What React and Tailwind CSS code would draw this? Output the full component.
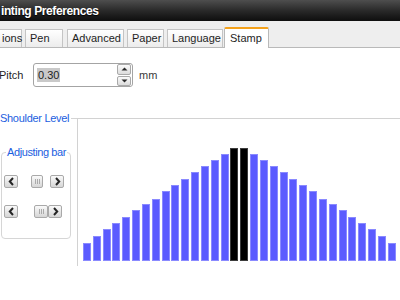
import React from 'react';

const tabs = [
  { label: 'ions', cls: 'ml-[-3px] w-[25px]' },
  { label: 'Pen', cls: 'ml-[3px] w-[38px]' },
  { label: 'Advanced', cls: 'ml-[4px] w-[57px]' },
  { label: 'Paper', cls: 'ml-[3px] w-[37px]' },
  { label: 'Language', cls: 'ml-[3px] w-[56px]' },
];

// 左右対称のバー高さ（中央の2本は黒）
const rise = [18, 25, 32, 38, 44, 51, 57, 62, 70, 76, 82, 89, 95, 101, 107];
const bars = [
  ...rise.map((h) => ({ h, on: false })),
  { h: 113, on: true },
  { h: 113, on: true },
  ...[...rise].reverse().map((h) => ({ h, on: false })),
];

function Chevron({ dir }) {
  return (
    <svg width="7" height="9" viewBox="0 0 7 9">
      <path
        d={dir === 'left' ? 'M5 1 L1.8 4.5 L5 8' : 'M2 1 L5.2 4.5 L2 8'}
        fill="none"
        stroke="#262626"
        strokeWidth="2"
      />
    </svg>
  );
}

function SmallBtn({ children, className = '' }) {
  return (
    <div
      className={`h-[13px] flex items-center justify-center rounded-[2px] border border-[#a9a9a9] bg-gradient-to-b from-[#fafafa] to-[#d6d6d6] ${className}`}
    >
      {children}
    </div>
  );
}

function Grip() {
  return (
    <div className="flex gap-[1px]">
      <div className="w-[1px] h-[5px] bg-[#aaaaaa]" />
      <div className="w-[1px] h-[5px] bg-[#aaaaaa]" />
      <div className="w-[1px] h-[5px] bg-[#aaaaaa]" />
    </div>
  );
}

function ScrollRow({ thumbLeft, thumbW, gapAfter }) {
  return (
    <div className="flex items-center h-[13px]">
      <SmallBtn className="w-[14px] ml-[2px]">
        <Chevron dir="left" />
      </SmallBtn>
      <div style={{ width: thumbLeft }} />
      <SmallBtn>
        <div style={{ width: thumbW }} className="flex justify-center">
          <Grip />
        </div>
      </SmallBtn>
      <div style={{ width: gapAfter }} />
      <SmallBtn className="w-[14px]">
        <Chevron dir="right" />
      </SmallBtn>
    </div>
  );
}

export default function App() {
  return (
    <div
      className="w-[400px] h-[300px] overflow-hidden bg-white flex flex-col"
      style={{ fontFamily: '"Liberation Sans", Arial, sans-serif' }}
    >
      {/* タイトルバー */}
      <div className="h-[21px] shrink-0 bg-gradient-to-b from-[#4e4e4e] via-[#2a2a2a] to-[#0e0e0e] flex items-center">
        <span className="ml-[1px] text-white font-bold text-[12px] tracking-[-0.4px] [text-shadow:0_1px_1px_#000]">
          inting Preferences
        </span>
      </div>

      {/* タブ */}
      <div className="h-[27px] shrink-0 bg-[#eeeeee] flex items-end border-b border-[#b9b9b9]">
        {tabs.map((t) => (
          <div
            key={t.label}
            className={`${t.cls} h-[18px] shrink-0 flex items-center pl-[4px] text-[11px] text-[#1e1e1e] border border-b-0 border-[#c4c4c4] bg-gradient-to-b from-[#ffffff] to-[#ececec]`}
          >
            {t.label}
          </div>
        ))}
        <div className="ml-[1px] w-[45px] h-[21px] mb-[-1px] shrink-0 flex items-center pl-[5px] text-[11px] text-[#1e1e1e] bg-white border border-b-0 border-[#b9b9b9] border-t-2 border-t-[#f4a21c] rounded-t-[2px]">
          Stamp
        </div>
      </div>

      {/* ピッチ */}
      <div className="flex items-center mt-[15px] h-[24px]">
        <span className="text-[11px] text-[#1e1e1e] ml-[-1px] w-[34px]">Pitch</span>
        <div className="w-[100px] h-[24px] border border-[#a4a4a4] rounded-[3px] flex items-center bg-white">
          <span className="ml-[3px] px-[1px] bg-[#c9c9c9] text-[11px] text-[#1e1e1e] leading-[14px]">0.30</span>
          <div className="ml-auto mr-[1px] w-[14px] h-[22px] flex flex-col gap-[1px]">
            <div className="flex-1 border border-[#a9a9a9] rounded-[2px] bg-gradient-to-b from-[#fbfbfb] to-[#dcdcdc] flex items-center justify-center">
              <svg width="7" height="4" viewBox="0 0 7 4">
                <path d="M0.5 3.5 L3.5 0.5 L6.5 3.5 Z" fill="#2a2a2a" />
              </svg>
            </div>
            <div className="flex-1 border border-[#a9a9a9] rounded-[2px] bg-gradient-to-b from-[#fbfbfb] to-[#dcdcdc] flex items-center justify-center">
              <svg width="7" height="4" viewBox="0 0 7 4">
                <path d="M0.5 0.5 L3.5 3.5 L6.5 0.5 Z" fill="#2a2a2a" />
              </svg>
            </div>
          </div>
        </div>
        <span className="ml-[6px] text-[11px] text-[#3a3a3a]">mm</span>
      </div>

      {/* 肩レベル */}
      <div className="flex mt-[26px]">
        <div className="w-[77px] shrink-0 flex flex-col">
          <div className="h-[10px] flex items-center">
            <span className="text-[11px] text-[#1b5ee0] tracking-[-0.3px] whitespace-nowrap leading-[10px]">
              Shoulder Level
            </span>
            <div className="flex-1 h-[1px] bg-[#d4d4d4] ml-[2px]" />
          </div>
          <fieldset className="mt-[23px] ml-[1px] w-[70px] h-[93px] border border-[#d6d6d6] rounded-[4px]">
            <legend className="ml-[4px] px-[1px] text-[11px] text-[#1b5ee0] tracking-[-0.4px] leading-[13px]">
              Adjusting bar
            </legend>
            <div className="mt-[16px]">
              <ScrollRow thumbLeft={13} thumbW={10} gapAfter={7} />
            </div>
            <div className="mt-[17px]">
              <ScrollRow thumbLeft={16} thumbW={12} gapAfter={0} />
            </div>
          </fieldset>
        </div>
        <div className="flex-1 mt-[5px] h-[148px] border-t border-l border-[#d2d2d2] flex items-end pl-[5px] pb-[5px] gap-[1.83px]">
          {bars.map((b, i) => (
            <div
              key={i}
              style={{ height: b.h }}
              className={
                b.on
                  ? 'w-[8px] shrink-0 bg-black border border-[#3c3c3c]'
                  : 'w-[8px] shrink-0 bg-[#5b5bff] border border-[#8a8aff]'
              }
            />
          ))}
        </div>
      </div>
    </div>
  );
}
